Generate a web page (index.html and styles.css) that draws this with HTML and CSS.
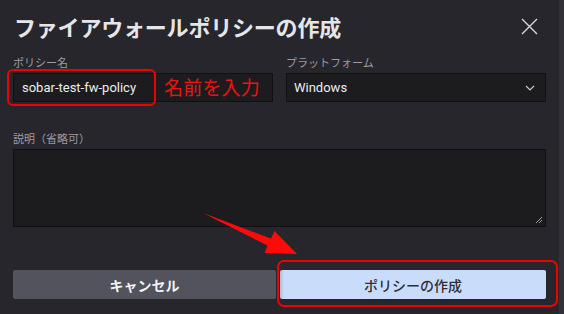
FILE: index.html
```html
<!DOCTYPE html>
<html lang="ja">
<head>
    <meta charset="UTF-8">
    <meta name="viewport" content="width=device-width, initial-scale=1.0">
    <title>ファイアウォールポリシーの作成</title>
    <link rel="stylesheet" href="styles.css">
</head>
<body>
    <div class="modal">
        <div class="modal-header">
            <h2>ファイアウォールポリシーの作成</h2>
            <button class="close-btn" aria-label="閉じる">
                <svg width="17" height="17" viewBox="0 0 17 17">
                    <path d="M1 1 L16 16 M16 1 L1 16" stroke="#d8d8dc" stroke-width="1.4" fill="none"/>
                </svg>
            </button>
        </div>

        <div class="field-row">
            <div class="field">
                <label>ポリシー名</label>
                <div class="text-input">sobar-test-fw-policy</div>
            </div>
            <div class="field">
                <label>プラットフォーム</label>
                <div class="select-input">
                    <span>Windows</span>
                    <svg width="10" height="6" viewBox="0 0 10 6">
                        <path d="M1 1 L5 5 L9 1" stroke="#c8c8cc" stroke-width="1.2" fill="none"/>
                    </svg>
                </div>
            </div>
        </div>

        <div class="field desc-field">
            <label>説明（省略可）</label>
            <div class="textarea">
                <svg class="resize" width="8" height="8" viewBox="0 0 8 8">
                    <path d="M1 7 L7 1 M4 7 L7 4" stroke="#9a9aa0" stroke-width="1" fill="none"/>
                </svg>
            </div>
        </div>

        <div class="modal-actions">
            <button class="btn btn-cancel">キャンセル</button>
            <button class="btn btn-create">ポリシーの作成</button>
        </div>
    </div>

    <div class="scrollbar"></div>

    <!-- annotations -->
    <div class="note-box note-name"></div>
    <div class="note-text">名前を入力</div>
    <svg class="note-arrow" width="564" height="314" viewBox="0 0 564 314">
        <polygon points="203,213 271,238.5 274.5,231 297,254 264.5,253 267.5,245.5" fill="#ff0a0a"/>
    </svg>
    <div class="note-box note-create"></div>
</body>
</html>
```

FILE: styles.css
```css
body {
    margin: 0;
    width: 564px;
    height: 314px;
    overflow: hidden;
    background-color: #26262c;
    font-family: "Noto Sans CJK JP", "Noto Sans", sans-serif;
    position: relative;
}
.modal {
    padding: 0 18px 0 13px;
}
.modal-header {
    display: flex;
    justify-content: space-between;
    align-items: center;
    height: 52px;
}
.modal-header h2 {
    margin: 0;
    padding-top: 0;
    font-size: 22px;
    font-weight: 700;
    color: #e6e6e8;
    letter-spacing: -0.2px;
    line-height: 30px;
    position: relative;
    left: 1px;
}
.close-btn {
    background: none;
    border: none;
    padding: 0;
    margin-right: 8px;
    margin-top: 1px;
    width: 17px;
    height: 17px;
    display: flex;
}
.field-row {
    display: grid;
    grid-template-columns: 260px 260px;
    gap: 13px;
}
.field label {
    display: block;
    font-size: 11px;
    line-height: 14px;
    color: #9c9ca2;
    margin-top: 3px;
    margin-bottom: 4px;
}
.text-input,
.select-input,
.textarea {
    background-color: #1c1c1f;
    border: 1px solid #111113;
    box-sizing: border-box;
}
.text-input,
.select-input {
    height: 29px;
    padding: 0 8px;
    display: flex;
    align-items: center;
    font-family: Roboto, "Noto Sans", sans-serif;
    font-size: 13px;
    color: #ececee;
}
.select-input {
    justify-content: space-between;
    padding: 0 10px 0 7px;
}
.desc-field {
    margin-top: 29px;
}
.textarea {
    height: 78px;
    position: relative;
}
.resize {
    position: absolute;
    right: 2px;
    bottom: 2px;
}
.modal-actions {
    display: grid;
    grid-template-columns: 263px 266px;
    gap: 4px;
    margin-top: 43px;
}
.btn {
    height: 29px;
    border: none;
    border-radius: 2px;
    font-family: "Noto Sans CJK JP", sans-serif;
    font-size: 14px;
    font-weight: 700;
    cursor: pointer;
}
.btn-cancel {
    background-color: #53535e;
    color: #f2f2f4;
}
.btn-create {
    background: linear-gradient(to right, #a9bcd8 0, #c9ddfb 4px, #c9ddfb 100%);
    color: #2e2e33;
    font-weight: 500;
}
.scrollbar {
    position: absolute;
    top: 0;
    right: 0;
    width: 5px;
    height: 314px;
    background-color: #313137;
}
.note-box {
    position: absolute;
    border: 2px solid #f00000;
    border-radius: 6px;
    box-sizing: border-box;
}
.note-name {
    left: 7px;
    top: 69px;
    width: 149px;
    height: 37px;
}
.note-create {
    left: 277px;
    top: 260px;
    width: 281px;
    height: 47px;
    border-radius: 7px;
}
.note-text {
    position: absolute;
    left: 164px;
    top: 74px;
    font-size: 19px;
    line-height: 26px;
    color: #ee1111;
    letter-spacing: 0.2px;
}
.note-arrow {
    position: absolute;
    left: 0;
    top: 0;
}
```
